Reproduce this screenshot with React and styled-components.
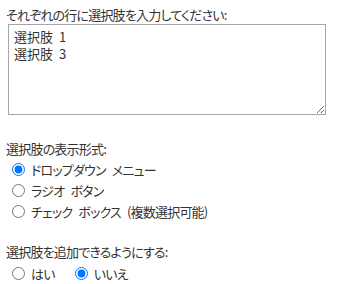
import React from "react";
import styled, { createGlobalStyle } from "styled-components";

const Global = createGlobalStyle`
  html, body { margin: 0; padding: 0; background: #fff; }
  body {
    font-family: "Noto Sans CJK JP", "Noto Sans", sans-serif;
    font-size: 13px;
    color: #333;
    font-feature-settings: "palt";
    letter-spacing: -0.8px;
    word-spacing: 4px;
  }
`;

const Page = styled.div`
  padding: 6px 14px 0 6px;
  display: flex;
  flex-direction: column;
`;

const Label = styled.div`
  line-height: 17px;
  height: 17px;
  margin-top: ${(p) => p.$mt || 0}px;
`;

const Area = styled.textarea`
  box-sizing: border-box;
  margin: 1px 0 0 2px;
  width: 318px;
  height: 91px;
  border: 1px solid #a6a6a6;
  border-radius: 0;
  padding: 3px 5px;
  font-family: inherit;
  font-size: 13px;
  line-height: 17px;
  color: #333;
  letter-spacing: 0;
  font-feature-settings: normal;
  word-spacing: 3px;
  resize: both;
  outline: none;
`;

const Group = styled.div`
  display: flex;
  flex-direction: ${(p) => (p.$row ? "row" : "column")};
  gap: ${(p) => (p.$row ? 14 : 0)}px;
  margin-top: ${(p) => (p.$row ? 3 : 2)}px;
`;

const Option = styled.label`
  display: flex;
  align-items: center;
  height: 21.2px;
  gap: 6px;
  padding-left: 6px;
`;

const Radio = styled.input`
  margin: 0;
  width: 13px;
  height: 13px;
  accent-color: #0075ff;
`;

export default function App() {
  return (
    <Page>
      <Global />
      <Label>それぞれの行に選択肢を入力してください:</Label>
      <Area defaultValue={"選択肢 1\n選択肢 3"} />
      <Label $mt={25}>選択肢の表示形式:</Label>
      <Group>
        <Option><Radio type="radio" name="fmt" defaultChecked />ドロップダウン メニュー</Option>
        <Option><Radio type="radio" name="fmt" />ラジオ ボタン</Option>
        <Option><Radio type="radio" name="fmt" />チェック ボックス (複数選択可能)</Option>
      </Group>
      <Label $mt={20}>選択肢を追加できるようにする:</Label>
      <Group $row>
        <Option><Radio type="radio" name="add" />はい</Option>
        <Option><Radio type="radio" name="add" defaultChecked />いいえ</Option>
      </Group>
    </Page>
  );
}
